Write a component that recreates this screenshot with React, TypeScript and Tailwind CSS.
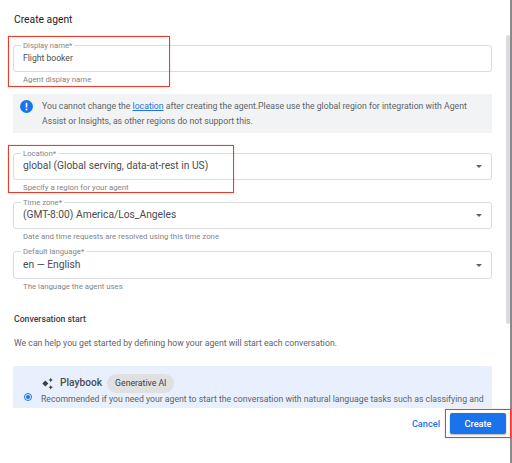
function Field({
  label,
  value,
  helper,
  select,
  big,
  tall,
  mb,
}: {
  label: string;
  value: string;
  helper: string;
  select?: boolean;
  big?: boolean;
  tall?: boolean;
  mb: string;
}) {
  return (
    <div className={mb}>
      <div className={`relative flex ${tall ? "h-[28px]" : "h-[27px]"} items-center justify-between rounded-[3px] border border-[#dadce0] pl-[9px] pr-[9px]`}>
        <span className="absolute left-[7px] top-[-5px] bg-white px-[2px] text-[7.7px] leading-[9px] text-[#80868b]">
          {label}
        </span>
        <span className={`${big ? "text-[10.25px]" : "text-[8.6px]"} leading-none text-[#4a4d50]`}>{value}</span>
        {select && <span className="h-0 w-0 border-x-[3px] border-t-[3px] border-x-transparent border-t-[#5f6368]" />}
      </div>
      <p className="mt-[3px] pl-[10px] text-[7.8px] leading-[10px] text-[#80868b]">{helper}</p>
    </div>
  );
}

export default function App() {
  return (
    <div className="relative h-[463px] w-[512px] overflow-hidden bg-white font-['Roboto',sans-serif]">
      <div className="pl-[13px] pr-[20px]">
        <h1 className="pt-[13px] pl-px text-[10.3px] leading-[14px] text-[#202124]">Create agent</h1>

        <div className="mt-[18px]">
          <Field label="Display name*" value="Flight booker" helper="Agent display name" mb="mb-[9px]" />
        </div>

        <div className="mb-[20px] flex h-[39px] gap-[7px] bg-[#f1f3f4] pl-[7px] pt-[5px]">
          <svg viewBox="0 0 24 24" className="mt-[1px] h-[13px] w-[13px] shrink-0 fill-[#1a73e8]">
            <circle cx="12" cy="12" r="12" />
            <rect x="10.5" y="5" width="3" height="9" fill="#fff" />
            <rect x="10.5" y="16" width="3" height="3" fill="#fff" />
          </svg>
          <p className="ml-[2px] whitespace-nowrap text-[8.7px] leading-[15px] text-[#5f6368]">
            You cannot change the <span className="text-[#1a73e8] underline">location</span> after creating the agent.Please use the global region for integration with Agent
            <br />
            Assist or Insights, as other regions do not support this.
          </p>
        </div>

        <Field label="Location*" value="global (Global serving, data-at-rest in US)" helper="Specify a region for your agent" select big mb="mb-[9px]" />
        <Field label="Time zone*" value="(GMT-8:00) America/Los_Angeles" helper="Date and time requests are resolved using this time zone" select big mb="mb-[9px]" />
        <Field label="Default language*" value="en — English" helper="The language the agent uses" select big tall mb="mb-0" />

        <h2 className="mt-[22px] pl-px text-[8.7px] font-medium leading-[10px] text-[#3c4043]">Conversation start</h2>
        <p className="mt-[14px] pl-px text-[8.7px] leading-[10px] text-[#5f6368]">
          We can help you get started by defining how your agent will start each conversation.
        </p>

        <div className="mt-[18px] flex h-[42px] items-start rounded-t-[2px] bg-[#e8f0fe]">
          <span className="ml-[11px] mt-[27px] flex h-[8px] w-[8px] shrink-0 items-center justify-center rounded-full border border-[#1a73e8]">
            <span className="h-[4px] w-[4px] rounded-full bg-[#1a73e8]" />
          </span>
          <div className="ml-[9px] min-w-0 flex-1">
            <div className="flex h-[28px] items-center pt-[7px]">
              <svg viewBox="0 0 24 24" className="h-[13px] w-[13px] fill-[#3c4043]">
                <path d="M8 6.5l5.5 5.5L8 17.5 2.5 12z" />
                <path d="M18 1.5l1.3 2.7L22 5.5l-2.7 1.3L18 9.5l-1.3-2.7L14 5.5l2.7-1.3z" />
                <path d="M18 15l1.4 2.6L22 19l-2.6 1.4L18 23l-1.4-2.6L14 19l2.6-1.4z" />
              </svg>
              <span className="ml-[6px] text-[10.2px] font-medium leading-none text-[#4a4d50]">Playbook</span>
              <span className="ml-[5px] flex h-[19px] items-center rounded-full bg-[#e0e0e0] px-[8px] text-[8.7px] text-[#3c4043]">Generative AI</span>
            </div>
            <p className="whitespace-nowrap text-[8.7px] leading-[11px] text-[#5f6368]">
              Recommended if you need your agent to start the conversation with natural language tasks such as classifying and
            </p>
          </div>
        </div>
      </div>

      <div className="mt-[5px] flex items-center justify-end gap-[10px] pr-[6px]">
        <button className="text-[9.2px] font-medium text-[#1a73e8]">Cancel</button>
        <button className="h-[21px] w-[56px] rounded-[2px] bg-[#1a73e8] text-[9.2px] font-medium text-white shadow-[0_1px_2px_rgba(60,64,67,0.4)]">
          Create
        </button>
      </div>

      {/* scrollbar and annotations sit on top of the dialog */}
      <div className="absolute left-[506px] top-[35px] h-[289px] w-[4px] rounded-[2px] bg-[#dadce0]" />
      <div className="absolute right-0 top-0 h-full w-[2px] bg-[#8a8a8a]" />
      <div className="absolute left-[8px] top-[36px] h-[51px] w-[162px] border border-[#ee3a2a] shadow-[0_0_1px_rgba(238,58,42,0.5)]" />
      <div className="absolute left-[8px] top-[145px] h-[48px] w-[226px] border border-[#ee3a2a] shadow-[0_0_1px_rgba(238,58,42,0.5)]" />
      <div className="absolute left-[445px] top-[409px] h-[29px] w-[66px] border border-[#ee3a2a] shadow-[0_0_1px_rgba(238,58,42,0.5)]" />
    </div>
  );
}
